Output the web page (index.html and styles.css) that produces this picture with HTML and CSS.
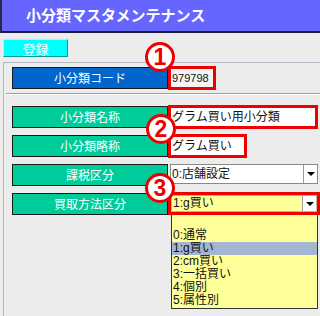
FILE: index.html
```html
<!DOCTYPE html>
<html lang="ja">
<head>
    <meta charset="UTF-8">
    <title>小分類マスタメンテナンス</title>
    <link rel="stylesheet" href="styles.css">
</head>
<body>
    <div class="title">小分類マスタメンテナンス</div>
    <div class="toolbar">
        <button class="btn-save">登録</button>
    </div>
    <div class="panel">
        <div class="row">
            <div class="label label-blue">小分類コード</div>
            <div class="mark mark-code"><div class="text-box">979798</div></div>
            <span class="badge badge-1">1</span>
        </div>
        <div class="sep"></div>
        <div class="row row-first">
            <div class="label">小分類名称</div>
            <div class="mark mark-name"><div class="text-box">グラム買い用小分類</div></div>
            <span class="badge badge-2">2</span>
        </div>
        <div class="row">
            <div class="label">小分類略称</div>
            <div class="mark mark-short"><div class="text-box">グラム買い</div></div>
        </div>
        <div class="row">
            <div class="label">課税区分</div>
            <div class="select select-tax">
                <span class="select-value">0:店舗設定</span>
                <span class="select-arrow"><i></i></span>
            </div>
            <span class="badge badge-3">3</span>
        </div>
        <div class="row">
            <div class="label">買取方法区分</div>
            <div class="mark mark-buy">
                <div class="select select-buy">
                    <span class="select-value">1:g買い</span>
                    <span class="select-arrow"><i></i></span>
                </div>
            </div>
            <ul class="dropdown">
                <li>0:通常</li>
                <li class="active">1:g買い</li>
                <li>2:cm買い</li>
                <li>3:一括買い</li>
                <li>4:個別</li>
                <li>5:属性別</li>
            </ul>
        </div>
    </div>
</body>
</html>
```

FILE: styles.css
```css
body {
    margin: 0;
    width: 320px;
    height: 316px;
    overflow: hidden;
    background: #ececec;
    font-family: "Liberation Sans", "Noto Sans CJK JP", sans-serif;
}
.title {
    height: 31px;
    line-height: 31px;
    padding-left: 24px;
    background: #6666ff;
    border-left: 2px solid #2a2a4a;
    border-bottom: 2px solid #1c1c3c;
    color: #fff;
    font-size: 15px;
    font-weight: bold;
}
.toolbar {
    padding: 6px 3px 5px;
    height: 18px;
}
.btn-save {
    display: block;
    width: 65px;
    height: 18px;
    padding: 0;
    background: #00ffff;
    border: 1px solid #7fffff;
    border-right-color: #009c9c;
    border-bottom-color: #009c9c;
    color: #fff;
    font-family: "Noto Sans CJK JP", sans-serif;
    font-size: 13px;
    line-height: 15px;
}
.panel {
    margin-left: 3px;
    height: 252px;
    padding-top: 4px;
    border-top: 1px solid #b4b8c4;
    border-left: 1px solid #b4b8c4;
}
.row {
    position: relative;
    display: flex;
    align-items: center;
    height: 22px;
    margin-top: 7px;
    padding-left: 8px;
}
.panel > .row:first-child {
    margin-top: 0;
}
.row.row-first {
    margin-top: 11px;
}
.label {
    box-sizing: border-box;
    width: 156px;
    height: 22px;
    line-height: 20px;
    background: #00cc99;
    border: 1px solid #1a1a1a;
    color: #fff;
    text-align: center;
    font-family: "Noto Sans CJK JP", sans-serif;
    font-size: 12px;
}
.label-blue {
    background: #0066cc;
}
.sep {
    margin: 4px 0 0 2px;
    height: 0;
    border-top: 1px solid #a0a0a0;
    border-bottom: 1px solid #fff;
}
.mark {
    box-sizing: border-box;
    height: 24px;
    border: 3px solid #ee0000;
    background: #fff;
}
.mark-code {
    width: 48px;
}
.mark-code .text-box {
    background: #f4f4f4;
}
.mark-name {
    width: 150px;
}
.mark-short {
    width: 79px;
}
.text-box {
    height: 18px;
    line-height: 18px;
    padding-left: 1px;
    font-size: 11px;
    color: #111;
    white-space: nowrap;
    overflow: hidden;
}
.mark-name .text-box,
.mark-short .text-box {
    font-size: 12px;
}
.select {
    box-sizing: border-box;
    display: flex;
    height: 20px;
    background: #fff;
    border: 1px solid #8a8a8a;
    font-size: 12px;
    color: #111;
}
.select-tax {
    align-self: flex-start;
    width: 148px;
    margin-left: 2px;
}
.select-value {
    flex: 1;
    line-height: 18px;
    padding-left: 1px;
    white-space: nowrap;
}
.select-arrow {
    display: flex;
    align-items: center;
    justify-content: center;
    width: 13px;
    border-left: 1px solid #9a9a9a;
    background: #fff;
}
.select-arrow i {
    width: 0;
    height: 0;
    border-left: 4px solid transparent;
    border-right: 4px solid transparent;
    border-top: 4px solid #000;
}
.mark-buy {
    align-self: flex-start;
    margin-top: -1px;
    width: 152px;
    height: 23px;
    background: #ffff99;
}
.select-buy {
    height: 17px;
    width: 146px;
    border-color: #b8b8a0;
    background: #ffff99;
}
.select-buy .select-value {
    line-height: 15px;
}
.badge {
    position: absolute;
    z-index: 2;
    width: 24px;
    height: 24px;
    border: 3px solid #ee0000;
    border-radius: 50%;
    background: #fff;
    color: #ee0000;
    font-size: 23px;
    font-weight: bold;
    line-height: 24px;
    text-align: center;
}
.badge-1 {
    left: 141px;
    top: -25px;
}
.badge-2 {
    left: 142px;
    top: 8px;
}
.badge-3 {
    left: 141px;
    top: 9px;
}
.dropdown {
    position: absolute;
    left: 167px;
    top: 22px;
    z-index: 1;
    box-sizing: border-box;
    width: 147px;
    margin: 0;
    padding: 14px 0 1px;
    list-style: none;
    background: #ffff99;
    border: 1px solid #333;
    border-top: none;
    font-size: 12px;
    color: #111;
}
.dropdown li {
    height: 13px;
    line-height: 13px;
    padding-left: 1px;
}
.dropdown li.active {
    background: #a3b5cf;
}
```
